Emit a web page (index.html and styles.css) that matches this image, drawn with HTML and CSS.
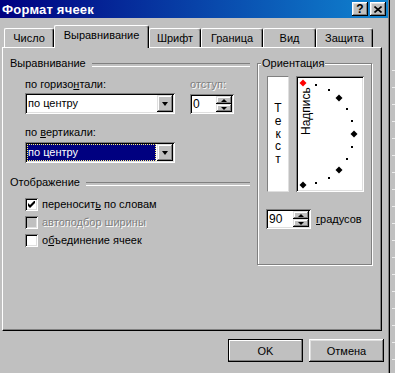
FILE: index.html
```html
<!DOCTYPE html>
<html lang="ru">
<head>
  <meta charset="UTF-8" />
  <title>Формат ячеек</title>
  <link rel="stylesheet" href="styles.css">
</head>
<body>
  <div class="dialog">
    <div class="titlebar">
      <span class="title">Формат ячеек</span>
      <div class="caption-btns">
        <div class="cap-btn">?</div>
        <div class="cap-btn">
          <svg width="8" height="7" viewBox="0 0 8 7"><path d="M0.5 0.5 L7.5 6.5 M7.5 0.5 L0.5 6.5" stroke="#000" stroke-width="1.6"/></svg>
        </div>
      </div>
    </div>

    <div class="tabs">
      <div class="tab tab-num">Число</div>
      <div class="tab tab-align active">Выравнивание</div>
      <div class="tab tab-font">Шрифт</div>
      <div class="tab tab-border">Граница</div>
      <div class="tab tab-view">Вид</div>
      <div class="tab tab-protect">Защита</div>
    </div>

    <div class="panel">
      <div class="left">
        <div class="sep">Выравнивание</div>
        <div class="fields">
          <div class="row">
            <div class="col">
              <div class="lbl">по горизо<u>н</u>тали:</div>
              <div class="combo">
                <div class="combo-text">по центру</div>
                <div class="drop"><span class="tri-down"></span></div>
              </div>
            </div>
            <div class="col">
              <div class="lbl disabled">отступ:</div>
              <div class="spin indent">
                <div class="spin-text">0</div>
                <div class="spin-btns">
                  <div class="spin-btn"><span class="tri-up-s"></span></div>
                  <div class="spin-btn"><span class="tri-down-s"></span></div>
                </div>
              </div>
            </div>
          </div>
          <div class="lbl lbl-v">по <u>в</u>ертикали:</div>
          <div class="combo focus">
            <div class="combo-text">по центру</div>
            <div class="drop"><span class="tri-down"></span></div>
          </div>
        </div>

        <div class="sep sep-view">Отображение</div>
        <div class="checks">
          <div class="check">
            <span class="box">
              <svg width="7" height="7" viewBox="0 0 7 7"><path d="M0 2 L2 4 L6 0 L7 0 L7 2 L2 7 L0 5 Z" fill="#000"/></svg>
            </span>
            <span>переносит<u>ь</u> по словам</span>
          </div>
          <div class="check disabled">
            <span class="box"></span>
            <span>автоподбор ширины</span>
          </div>
          <div class="check">
            <span class="box"></span>
            <span>о<u>б</u>ъединение ячеек</span>
          </div>
        </div>
      </div>

      <div class="group">
        <span class="legend">Ориентация</span>
        <div class="dial-row">
          <div class="vtext">
            <span>Т</span><span>е</span><span>к</span><span>с</span><span>т</span>
          </div>
          <div class="dial">
            <svg width="64" height="112" viewBox="0 0 64 112">
              <text class="dial-label" transform="translate(12,57) rotate(-90)">Надпись</text>
              <polygon points="5,1.5 8.5,5 5,8.5 1.5,5" fill="#ff0000"/>
              <rect x="17" y="6" width="2" height="2"/>
              <rect x="30" y="11" width="2" height="2"/>
              <polygon points="41,16.5 44.5,20 41,23.5 37.5,20"/>
              <rect x="48" y="30" width="2" height="2"/>
              <rect x="53" y="42" width="2" height="2"/>
              <polygon points="56,52.5 59.5,56 56,59.5 52.5,56"/>
              <rect x="53" y="68" width="2" height="2"/>
              <rect x="48" y="80" width="2" height="2"/>
              <polygon points="41,88.5 44.5,92 41,95.5 37.5,92"/>
              <rect x="30" y="99" width="2" height="2"/>
              <rect x="17" y="104" width="2" height="2"/>
              <polygon points="5,103.5 8.5,107 5,110.5 1.5,107"/>
            </svg>
          </div>
        </div>
        <div class="deg-row">
          <div class="spin deg">
            <div class="spin-text">90</div>
            <div class="spin-btns">
              <div class="spin-btn"><span class="tri-up-s"></span></div>
              <div class="spin-btn"><span class="tri-down-s"></span></div>
            </div>
          </div>
          <span class="deg-label"><u>г</u>радусов</span>
        </div>
      </div>
    </div>

    <div class="actions">
      <div class="btn default">OK</div>
      <div class="btn">Отмена</div>
    </div>
  </div>
  <div class="sheet"></div>
</body>
</html>
```

FILE: styles.css
```css
* {
  box-sizing: border-box;
}
body {
  margin: 0;
  width: 395px;
  height: 373px;
  overflow: hidden;
  display: flex;
  background: #c0c0c0;
  font-family: "Liberation Sans", Arial, sans-serif;
  font-size: 11px;
  color: #000;
}
u {
  text-underline-offset: 1px;
}

/* window */
.dialog {
  width: 390px;
  height: 373px;
  flex: none;
  background: #c0c0c0;
  box-shadow: inset -1px 0 #000, inset -2px 0 #808080;
}
.sheet {
  flex: 1;
  margin-top: 70px;
  background-image: linear-gradient(to bottom, #ececec 1px, transparent 1px);
  background-size: 3px 17px;
  background-repeat: repeat-y;
  background-position: right top;
}
.titlebar {
  height: 18px;
  margin-right: 2px;
  padding: 0 2px 0 2px;
  display: flex;
  align-items: center;
  justify-content: space-between;
  background: linear-gradient(to right, #000080, #1084d0);
  color: #fff;
  font-weight: bold;
}
.title {
  font-size: 13px;
  letter-spacing: 0.2px;
}
.caption-btns {
  display: flex;
  gap: 2px;
}
.cap-btn {
  width: 16px;
  height: 14px;
  display: flex;
  align-items: center;
  justify-content: center;
  background: #c0c0c0;
  color: #000;
  font-size: 12px;
  font-weight: bold;
  line-height: 14px;
  box-shadow: inset -1px -1px #000, inset 1px 1px #fff, inset -2px -2px #808080, inset 2px 2px #dfdfdf;
}

/* tabs */
.tabs {
  display: flex;
  align-items: flex-end;
  height: 22px;
  margin-top: 8px;
  padding-left: 4px;
  position: relative;
  z-index: 1;
  margin-bottom: -1px;
}
.tab {
  height: 19px;
  margin-bottom: 1px;
  padding-top: 3px;
  line-height: 13px;
  text-align: center;
  border-top: 1px solid #fff;
  border-left: 1px solid #fff;
  border-right: 1px solid #000;
  border-radius: 2px 3px 0 0;
  box-shadow: inset -1px 0 #808080;
  background: #c0c0c0;
}
.tab.active {
  height: 23px;
  margin-bottom: 0;
}
.tab-num { width: 50px; }
.tab-align { width: 95px; }
.tab-font { width: 52px; }
.tab-border { width: 62px; }
.tab-view { width: 53px; }
.tab-protect { width: 57px; }

/* panel */
.panel {
  width: 380px;
  height: 284px;
  margin-left: 2px;
  padding: 9px 0 0 7px;
  display: flex;
  gap: 7px;
  border-top: 1px solid #fff;
  border-left: 1px solid #fff;
  border-right: 1px solid #000;
  border-bottom: 1px solid #000;
  box-shadow: inset -1px -1px #808080;
}
.left {
  width: 240px;
}
.sep {
  display: flex;
  align-items: center;
  height: 13px;
  line-height: 13px;
}
.sep::after {
  content: "";
  flex: 1;
  height: 2px;
  margin: 2px 0 0 6px;
  border-top: 1px solid #808080;
  border-bottom: 1px solid #fff;
}
.sep-view {
  margin-top: 13px;
}
.fields {
  padding-left: 15px;
}
.row {
  display: flex;
  gap: 15px;
  margin-top: 8px;
}
.lbl {
  height: 13px;
  line-height: 13px;
}
.lbl-v {
  margin-top: 12px;
}
.disabled {
  color: #808080;
  text-shadow: 1px 1px #fff;
}

/* sunken fields */
.combo,
.spin,
.box,
.dial {
  background: #fff;
  box-shadow: inset 1px 1px #808080, inset -1px -1px #fff, inset 2px 2px #000, inset -2px -2px #dfdfdf;
}
.combo {
  display: flex;
  width: 150px;
  height: 21px;
  margin-top: 2px;
  padding: 2px;
}
.lbl-v + .combo {
  margin-top: 3px;
}
.combo-text {
  flex: 1;
  padding-left: 1px;
  line-height: 17px;
}
.combo.focus .combo-text {
  margin-right: 1px;
  padding-left: 0;
  line-height: 15px;
  background: #000080;
  color: #fff;
  border: 1px dotted #fff27a;
}
.drop,
.spin-btn {
  display: flex;
  align-items: center;
  justify-content: center;
  background: #c0c0c0;
  box-shadow: inset -1px -1px #000, inset 1px 1px #dfdfdf, inset -2px -2px #808080, inset 2px 2px #fff;
}
.drop {
  width: 16px;
  height: 17px;
}
.tri-down {
  width: 0;
  height: 0;
  border-left: 3.5px solid transparent;
  border-right: 3.5px solid transparent;
  border-top: 4px solid #000;
}
.tri-down-s,
.tri-up-s {
  width: 0;
  height: 0;
  border-left: 3px solid transparent;
  border-right: 3px solid transparent;
}
.tri-down-s {
  border-top: 3px solid #000;
}
.tri-up-s {
  border-bottom: 3px solid #000;
}
.spin {
  display: flex;
  height: 20px;
  padding: 2px;
}
.spin.indent {
  width: 44px;
  margin-top: 3px;
}
.spin.deg {
  width: 45px;
  margin-left: -1px;
}
.spin-text {
  flex: 1;
  padding-left: 1px;
  line-height: 16px;
  font-size: 12px;
}
.spin-btns {
  display: flex;
  flex-direction: column;
  width: 16px;
}
.spin-btn {
  flex: 1;
}

/* checkboxes */
.checks {
  margin-top: 6px;
  padding-left: 15px;
}
.check {
  display: flex;
  align-items: center;
  gap: 4px;
  height: 18px;
}
.box {
  width: 13px;
  height: 13px;
  display: flex;
  align-items: center;
  justify-content: center;
}
.check.disabled .box {
  background: #c0c0c0;
}

/* orientation */
.group {
  position: relative;
  width: 115px;
  height: 202px;
  margin-top: 6px;
  padding: 12px 0 0 9px;
  border: 1px solid #808080;
  box-shadow: inset 1px 1px #fff, 1px 1px #fff;
}
.legend {
  position: absolute;
  top: -7px;
  left: 3px;
  padding: 0 1px;
  line-height: 13px;
  background: #c0c0c0;
}
.dial-row {
  display: flex;
  gap: 7px;
}
.vtext {
  width: 22px;
  height: 116px;
  display: flex;
  flex-direction: column;
  align-items: center;
  justify-content: center;
  background: #fff;
  border: 1px solid;
  border-color: #808080 #dfdfdf #dfdfdf #808080;
  line-height: 12.7px;
  font-size: 12px;
}
.dial {
  width: 68px;
  height: 116px;
  padding: 2px;
}
.dial svg {
  display: block;
}
.dial-label {
  font-family: "Liberation Sans", Arial, sans-serif;
  font-size: 12px;
}
.deg-row {
  display: flex;
  align-items: center;
  gap: 5px;
  margin-top: 17px;
}

/* buttons */
.actions {
  display: flex;
  justify-content: flex-end;
  gap: 6px;
  margin-top: 8px;
  padding-right: 6px;
}
.btn {
  width: 75px;
  height: 23px;
  display: flex;
  align-items: center;
  justify-content: center;
  background: #c0c0c0;
  box-shadow: inset -1px -1px #000, inset 1px 1px #fff, inset -2px -2px #808080, inset 2px 2px #dfdfdf;
}
.btn.default {
  border: 1px solid #000;
  box-shadow: inset -1px -1px #808080, inset 1px 1px #fff;
}
```
